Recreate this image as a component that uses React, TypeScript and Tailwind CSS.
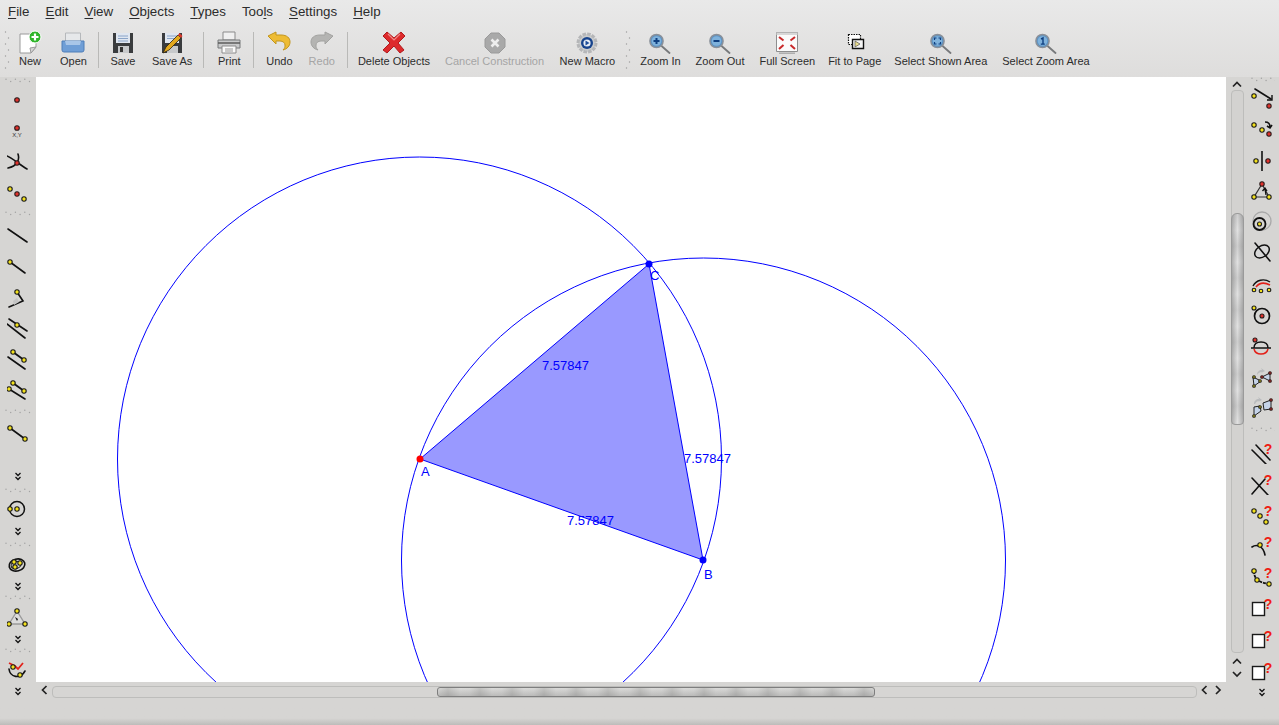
import type { ReactNode } from "react";

const INK = "#111";

function Y({ x, y, r = 2.2 }: { x: number; y: number; r?: number }) {
  return <circle cx={x} cy={y} r={r} fill="#f4e21c" stroke="#1a1a1a" strokeWidth="1.1" />;
}

function Rd({ x, y, r = 2.2 }: { x: number; y: number; r?: number }) {
  return <circle cx={x} cy={y} r={r} fill="#e0322c" stroke="#2a1a1a" strokeWidth="1.1" />;
}

function Ask() {
  return (
    <text x="17" y="12" fontSize="14" fontWeight="700" textAnchor="middle" fill="#ee1c14" fontFamily="'Liberation Sans', sans-serif">
      ?
    </text>
  );
}

function Box() {
  return <rect x="1.5" y="5.5" width="12" height="13" fill="#fff" stroke="#1a1a1a" strokeWidth="1.4" />;
}

function Ic({ children, size = 22 }: { children: ReactNode; size?: number }) {
  return (
    <svg width={size} height={size} viewBox={`0 0 ${size} ${size}`} fill="none" className="block">
      {children}
    </svg>
  );
}

function Lens({ children }: { children?: ReactNode }) {
  return (
    <>
      <path d="M13 15.5l8.5 7.5" stroke="#77797b" strokeWidth="1.8" strokeLinecap="round" />
      <circle cx="8.5" cy="11" r="6.6" fill="#5c93c4" stroke="#8a9099" strokeWidth="1.5" />
      <circle cx="8.5" cy="11" r="4.8" fill="#7fb2dc" />
      <g transform="translate(-2 .5)">{children}</g>
    </>
  );
}

const toolbarIcons: Record<string, ReactNode> = {
  New: (
    <>
      <path d="M2 4h13l3 4v9l-5 6H2z" fill="#fff" stroke="#9a9a9a" />
      <path d="M13 23l-1-5 6-1z" fill="#d5d5d5" stroke="#9a9a9a" />
      <circle cx="17" cy="7" r="6" fill="#2fb52a" stroke="#fff" />
      <path d="M13.5 7h7M17 3.5v7" stroke="#fff" strokeWidth="2.2" />
    </>
  ),
  Open: (
    <>
      <path d="M4.5 3h15v9h-15z" fill="#e6e8ea" stroke="#b5b8bb" />
      <path d="M1 11h22v9a2 2 0 0 1-2 2H3a2 2 0 0 1-2-2z" fill="#6f9ed6" stroke="#4f7eb8" />
      <path d="M4 11h16l-1 4H5z" fill="#a9c6e8" />
    </>
  ),
  Save: (
    <>
      <path d="M2 3h20v20H2z" fill="#3a3c3e" />
      <path d="M5 3h14v10H5z" fill="#dfe6f0" />
      <path d="M7 6h10M7 8.5h10M7 11h10" stroke="#8aa4c8" />
      <path d="M7 16h11v7H7z" fill="#c7c9cb" />
      <path d="M9 17h3v5H9z" fill="#333" />
    </>
  ),
  "Save As": (
    <>
      <path d="M2 3h20v20H2z" fill="#3a3c3e" />
      <path d="M5 3h14v10H5z" fill="#dfe6f0" />
      <path d="M7 6h10M7 8.5h8" stroke="#8aa4c8" />
      <path d="M7 16h11v7H7z" fill="#c7c9cb" />
      <path d="M3 23l3-6L18 5l3 3L9 20z" fill="#e4a91e" stroke="#2c2210" strokeWidth="0.8" />
      <path d="M18 5l3 3 1.5-2-3-3z" fill="#d83a2e" />
    </>
  ),
  Print: (
    <>
      <path d="M6 2h12v8H6z" fill="#f0f0f0" stroke="#8b8b8b" />
      <path d="M1 10h22v8H1z" fill="#c9cacb" stroke="#77797b" />
      <path d="M1 13h22" stroke="#555" strokeWidth="1.4" />
      <path d="M5 16h14v7H5z" fill="#fafafa" stroke="#8b8b8b" />
      <path d="M8 19h8M8 21h8" stroke="#999" />
    </>
  ),
  Undo: (
    <path
      d="M1 6l8-4v3h5c6 0 9 3 9 7 0 4-3 7-7 8 2-2 2-3 2-5 0-2-2-4-5-4H9v3z"
      fill="#eebc34"
      stroke="#c2951c"
      strokeLinejoin="round"
    />
  ),
  Redo: (
    <path
      d="M23 6l-8-4v3h-5C4 5 1 8 1 12c0 4 3 7 7 8-2-2-2-3-2-5 0-2 2-4 5-4h4v3z"
      fill="#b4b4b2"
      stroke="#a2a2a0"
      strokeLinejoin="round"
    />
  ),
  "Delete Objects": (
    <>
      <path d="M5 2l7 6 7-6 4 4-7 7 6 7-4 3-6-7-7 7-4-3 7-7-7-7z" fill="#dd2a2c" stroke="#b01a1c" strokeLinejoin="round" />
      <path d="M6 4l6 6 6-6" stroke="#f28a8a" strokeWidth="1.2" />
    </>
  ),
  "Cancel Construction": (
    <>
      <path d="M8 3h8l6 6v8l-6 6H8l-6-6V9z" fill="#a9a9a9" stroke="#9a9a9a" strokeLinejoin="round" />
      <path d="M8.5 9.5l7 7m0-7l-7 7" stroke="#eee" strokeWidth="2.6" />
    </>
  ),
  "New Macro": (
    <>
      <circle cx="12" cy="13" r="9" fill="#c9cbcc" stroke="#b5b6b8" strokeWidth="3" strokeDasharray="3.5 1.2" />
      <circle cx="12" cy="13" r="6" fill="#17438c" />
      <circle cx="12" cy="13" r="3.6" fill="#e8eef6" />
      <path d="M10.5 10.5l4 2.5-4 2.5z" fill="#1f4f9c" />
    </>
  ),
  "Zoom In": (
    <Lens>
      <path d="M7.5 10.5h6M10.5 7.5v6" stroke="#0e3f80" strokeWidth="2" />
    </Lens>
  ),
  "Zoom Out": (
    <Lens>
      <path d="M7.5 10.5h6" stroke="#0e3f80" strokeWidth="2" />
    </Lens>
  ),
  "Full Screen": (
    <>
      <path d="M1.5 2.5h21v19h-21z" fill="#fbfbfb" stroke="#8e8e8e" />
      <path d="M1.5 2.5h21v2.5h-21z" fill="#d8d8d8" />
      <path d="M4 7l4.5 3.5M4 19l4.5-4M20 7l-4.5 3.5M20 19l-4.5-4" stroke="#c9292a" strokeWidth="2" />
      <path d="M4 23.2h16" stroke="#a9a9a9" strokeWidth="1.4" />
    </>
  ),
  "Fit to Page": (
    <>
      <path d="M5.5 4.5h12v10h-12z" fill="#fff" stroke="#111" strokeWidth="1.2" strokeDasharray="1.5 1" />
      <path d="M9.5 9.5h11v9h-11z" fill="#f5f5f5" stroke="#111" strokeWidth="1.4" />
      <path d="M12 11l5 3-5 3z" fill="#e9dc8d" stroke="#555" strokeWidth="0.7" />
    </>
  ),
  "Select Shown Area": (
    <Lens>
      <path d="M7.5 9.5v-2h2M11.5 7.5h2v2M13.5 11.5v2h-2M9.5 13.5h-2v-2" stroke="#0e3f80" strokeWidth="1.2" />
    </Lens>
  ),
  "Select Zoom Area": (
    <Lens>
      <path d="M9 8.5l2-1v6M8.8 13.6h4" stroke="#0e3f80" strokeWidth="1.4" />
    </Lens>
  ),
};

function ToolButton({ label, disabled, pad = "px-2" }: { label: string; disabled?: boolean; pad?: string }) {
  return (
    <div className={`flex flex-col items-center ${pad}`}>
      <div className="h-[24px] min-w-[26px] flex justify-center">
        <Ic size={24}>{toolbarIcons[label]}</Ic>
      </div>
      <span className={`mt-[1px] text-[11px] leading-[13px] whitespace-nowrap ${disabled ? "text-[#a5a5a5]" : "text-[#2c2c2c]"}`}>
        {label}
      </span>
    </div>
  );
}

function Sep({ l = 3, r = 4 }: { l?: number; r?: number }) {
  return <div className="w-px h-[36px] mt-[2px] bg-[#b9b9b7] shrink-0" style={{ marginLeft: l, marginRight: r }} />;
}

function VGrip({ className }: { className?: string }) {
  return (
    <svg width="6" height="38" className={className}>
      {[0, 1, 2, 3, 4, 5, 6].map((i) => (
        <circle key={i} cx={i % 2 ? 4.5 : 1.5} cy={1 + i * 6} r="0.7" fill="#9c9c9c" />
      ))}
    </svg>
  );
}

function HGrip({ h, width = 30 }: { h: number; width?: number }) {
  return (
    <div className="flex items-center justify-center shrink-0" style={{ height: h }}>
      <svg width={width} height="5">
        {[0, 1, 2, 3, 4, 5].map((i) => (
          <circle key={i} cx={3 + i * 4.7} cy={i % 2 ? 3.5 : 1.2} r="0.7" fill="#a2a2a2" />
        ))}
      </svg>
    </div>
  );
}

function More({ h }: { h: number }) {
  return (
    <div className="flex items-center justify-center shrink-0" style={{ height: h }}>
      <svg width="8" height="9" fill="none">
        <path d="M1.5 1l2.5 2.5L6.5 1M1.5 5l2.5 2.5L6.5 5" stroke="#111" strokeWidth="1.3" />
      </svg>
    </div>
  );
}

function Slot({ children, h = 31 }: { children: ReactNode; h?: number }) {
  return (
    <div className="flex items-center justify-center shrink-0" style={{ height: h }}>
      <Ic>{children}</Ic>
    </div>
  );
}

const ln = { stroke: INK, strokeWidth: 1.6, strokeLinecap: "round" as const };

function LeftToolbar() {
  return (
    <div className="w-[36px] shrink-0 flex flex-col items-center">
      <HGrip h={7} />
      <Slot><Rd x={10} y={11} r={2.3} /></Slot>
      <Slot>
        <Rd x={10} y={8} r={2.3} />
        <text x="10" y="17" fontSize="6" textAnchor="middle" fill="#333" fontFamily="'Liberation Sans', sans-serif">X,Y</text>
      </Slot>
      <Slot>
        <path d="M0 5c4 1 13 9 20 13M11 3c2 6-1 12-10 14" {...ln} />
        <Rd x={10} y={12} />
      </Slot>
      <Slot>
        <Y x={3} y={7} />
        <Rd x={10} y={12} />
        <Y x={17} y={17} />
      </Slot>
      <HGrip h={11} />
      <Slot><path d="M1 5l19 13" {...ln} /></Slot>
      <Slot>
        <path d="M3 7l15 11" {...ln} />
        <Y x={3} y={7} />
      </Slot>
      <Slot>
        <path d="M10 6l6 9L2 21" {...ln} />
        <path d="M6 15l4-3 2 4-5 3z" fill="#c4c4c4" />
        <Y x={10} y={6} />
      </Slot>
      <Slot>
        <path d="M2 2l18 12M0 7l18 14" {...ln} />
        <Y x={10} y={8} />
      </Slot>
      <Slot>
        <path d="M1 9l17 12" {...ln} />
        <path d="M6 4l11 8" stroke={INK} strokeWidth="1.8" />
        <Y x={6} y={4} />
        <Y x={17} y={12} />
      </Slot>
      <Slot>
        <path d="M2 10l16 10" {...ln} />
        <path d="M6 4l11 8" stroke={INK} strokeWidth="1.8" />
        <Y x={6} y={4} />
        <Y x={17} y={12} />
        <Y x={2} y={10} />
      </Slot>
      <HGrip h={12} />
      <Slot>
        <path d="M3 6l15 11" {...ln} />
        <Y x={3} y={6} />
        <Y x={18} y={17} />
      </Slot>
      <div className="h-[17px] shrink-0" />
      <More h={22} />
      <HGrip h={6} />
      <Slot>
        <circle cx="10" cy="11" r="7.5" stroke={INK} strokeWidth="1.5" />
        <Y x={3} y={11} />
        <Y x={10} y={11} />
      </Slot>
      <More h={15} />
      <HGrip h={10} />
      <Slot>
        <ellipse cx="10" cy="11" rx="8" ry="6" transform="rotate(-15 10 11)" stroke={INK} strokeWidth="1.6" />
        <ellipse cx="9" cy="11" rx="5" ry="3.6" transform="rotate(-15 9 11)" stroke={INK} />
        <Y x={7} y={8} />
        <Y x={13} y={9} />
        <Y x={8} y={13} />
      </Slot>
      <More h={12} />
      <HGrip h={10} />
      <Slot>
        <path d="M10 4L2 17h16z" fill="#dcdcdc" stroke="#9a9a9a" strokeWidth="1.4" />
        <path d="M8 10l3 2-1 2z" fill="#111" />
        <Y x={10} y={4} />
        <Y x={2} y={17} />
        <Y x={18} y={17} />
      </Slot>
      <More h={12} />
      <HGrip h={10} />
      <Slot>
        <path d="M2 9c1 8 11 11 16 2" {...ln} />
        <path d="M2 3l6 3 3 3 5-6" stroke="#e32119" strokeWidth="1.8" />
        <Y x={6} y={7} />
        <Y x={13} y={15} />
      </Slot>
      <More h={10} />
    </div>
  );
}

function RightToolbar() {
  return (
    <div className="w-[31px] shrink-0 flex flex-col items-center pr-[3px]">
      <HGrip h={5} width={26} />
      <Slot>
        <path d="M4 2l16 10" {...ln} />
        <path d="M16 13h5V8" stroke={INK} strokeWidth="1.4" />
        <Y x={3} y={9} />
        <Rd x={18} y={19} />
      </Slot>
      <Slot>
        <path d="M14 4c3 0 5 2 5 5m-3-1l3 2 2-3" stroke={INK} strokeWidth="1.6" />
        <Y x={3} y={7} />
        <Y x={11} y={12} />
        <Rd x={18} y={16} />
      </Slot>
      <Slot>
        <path d="M11 2v20" stroke={INK} strokeWidth="1.6" />
        <Y x={5} y={12} />
        <Rd x={17} y={12} />
      </Slot>
      <Slot>
        <path d="M11 4L3 17h15z" stroke="#333" strokeWidth="1.2" />
        <path d="M15 15l-1-6m-2.5 2l2.5-3 2 3" stroke={INK} strokeWidth="1.3" />
        <Rd x={11} y={4} />
        <Y x={3} y={17} />
        <Y x={18} y={17} />
      </Slot>
      <Slot>
        <circle cx="11" cy="10" r="9" stroke="#a9a9a9" strokeWidth="1.3" />
        <circle cx="8.5" cy="13" r="6" stroke={INK} strokeWidth="1.8" />
        <Y x={8.5} y={13} r={2} />
      </Slot>
      <Slot>
        <ellipse cx="11" cy="9.5" rx="8" ry="5.5" transform="rotate(-35 11 9.5)" fill="#d8d8d8" stroke={INK} strokeWidth="1.5" />
        <path d="M4 1l15 18" {...ln} />
      </Slot>
      <Slot>
        <path d="M2 13c3-6 11-8 17-4" stroke={INK} strokeWidth="1.4" />
        <path d="M5 14c3-4 8-5 14-2" stroke="#e32119" strokeWidth="1.5" />
        <Y x={3} y={17} r={1.8} />
        <Y x={10} y={18} r={1.8} />
        <Y x={18} y={17} r={1.8} />
      </Slot>
      <Slot>
        <circle cx="11" cy="12" r="7.5" stroke={INK} strokeWidth="1.7" />
        <Rd x={11} y={12} r={2} />
        <Y x={3} y={4} r={2} />
      </Slot>
      <Slot>
        <path d="M0 13h20" stroke={INK} strokeWidth="1.5" />
        <path d="M3 13c0-4 3-6 7-6s7 2 7 6" stroke={INK} strokeWidth="1.4" />
        <path d="M3 14c1 4 4 5 7 5s6-1 7-5" stroke="#e32119" strokeWidth="1.5" />
        <Rd x={4} y={5} r={2} />
      </Slot>
      <Slot>
        <path d="M6 9c0-3 2-5 5-5l-1-2 4 3-4 2 1-1c-2 0-4 1-5 3z" fill="#b9bbbd" />
        <path d="M11 11l8-4v8z" fill="#c5d3e8" stroke="#222" strokeWidth="1" />
        <path d="M2 11l8 4-7 5z" fill="#c5d3e8" stroke="#222" strokeWidth="1" />
        <Rd x={19} y={7} r={1.3} />
        <Rd x={19} y={15} r={1.3} />
        <Rd x={11} y={11} r={1.3} />
        <Y x={3} y={11} r={1.3} />
        <Y x={9} y={15} r={1.3} />
        <Y x={3} y={20} r={1.3} />
      </Slot>
      <Slot h={29}>
        <path d="M3 8c0-3 2-5 5-5L7 1l4 3-4 2 1-1c-2 0-3 1-4 3z" fill="#b9bbbd" />
        <path d="M12 7l8-3v9l-7 1z" fill="#c5d3e8" stroke="#222" strokeWidth="1" />
        <path d="M3 11l6-1 1 5-7 5z" fill="#c5d3e8" stroke="#222" strokeWidth="1" />
        <Rd x={20} y={4} r={1.3} />
        <Rd x={20} y={13} r={1.3} />
        <Y x={3} y={20} r={1.3} />
        <Y x={9} y={11} r={1.3} />
      </Slot>
      <HGrip h={16} width={26} />
      <Slot>
        <path d="M1 8l14 14M5 3l14 15" {...ln} />
        <Ask />
      </Slot>
      <Slot>
        <path d="M1 5l16 17M1 21L14 6" {...ln} />
        <Ask />
      </Slot>
      <Slot>
        <Y x={3} y={7} />
        <Y x={9} y={12} />
        <Y x={15} y={18} />
        <Ask />
      </Slot>
      <Slot>
        <path d="M1 12c4-3 11-2 13 8" {...ln} />
        <Y x={9} y={10} />
        <Ask />
      </Slot>
      <Slot>
        <path d="M3 5c0 7 3 11 15 13" stroke={INK} strokeWidth="1.8" strokeDasharray="3 1" />
        <Y x={3} y={5} />
        <Y x={6} y={14} />
        <Y x={18} y={18} />
        <Ask />
      </Slot>
      <Slot h={32}><Box /><Ask /></Slot>
      <Slot h={32}><Box /><Ask /></Slot>
      <Slot><Box /><Ask /></Slot>
      <More h={10} />
    </div>
  );
}

function Chev({ d }: { d: string }) {
  return (
    <svg width="10" height="10" fill="none" className="block">
      <path d={d} stroke="#222" strokeWidth="1.7" />
    </svg>
  );
}

function VerticalScroll() {
  return (
    <div className="w-[22px] shrink-0 flex flex-col items-center pt-[3px]">
      <Chev d="M1 6.5l4-4 4 4" />
      <div className="w-[13px] flex-1 flex flex-col rounded-[4px] border border-[#bdbdbb] bg-[#d3d2d0]">
        <div className="h-[122px]" />
        <div className="h-[212px] -mx-px rounded-b-[4px] rounded-t-[6px] border border-[#9a9a9a] bg-[linear-gradient(90deg,#8f8f8f88,#ffffff44_50%,#8f8f8f88),repeating-linear-gradient(180deg,#bcbcbc_0px,#d6d6d6_16px,#bcbcbc_32px)]" />
      </div>
      <div className="flex flex-col mt-[4px] mb-[3px] gap-[2px]">
        <Chev d="M1 6.5l4-4 4 4" />
        <Chev d="M1 3l4 4 4-4" />
      </div>
    </div>
  );
}

function HorizontalScroll() {
  return (
    <div className="h-[16px] flex items-center pr-[22px] bg-[#d6d5d3]">
      <div className="w-[16px] pl-[2px] flex justify-center">
        <Chev d="M6.5 1l-4 4 4 4" />
      </div>
      <div className="flex-1 h-[12px] mt-[4px] rounded-[4px] border border-[#bdbdbb] flex items-stretch">
        <div className="w-[384px]" />
        <div className="w-[438px] rounded-[3px] border border-[#7e7e7e] bg-[linear-gradient(180deg,#ffffff33,#8f8f8f55),repeating-linear-gradient(90deg,#cfcfcd_0px,#b4b4b2_10px,#d2d2d0_22px,#cfcfcd_32px)]" />
      </div>
      <div className="w-[29px] pl-[3px] flex gap-[3px]">
        <Chev d="M6.5 1l-4 4 4 4" />
        <Chev d="M3 1l4 4-4 4" />
      </div>
    </div>
  );
}

function Geometry() {
  const blue = "#0000ff";
  const font = "'Liberation Sans', sans-serif";
  const labels: [string, number, number][] = [
    ["7.57847", 542, 370],
    ["7.57847", 684, 463],
    ["7.57847", 567, 525],
    ["A", 421, 476],
    ["B", 704, 579],
    ["C", 650, 280],
  ];
  return (
    <svg viewBox="36 77 1190 605" className="block w-full h-full" fill="none">
      <circle cx="419.5" cy="459" r="302" stroke={blue} />
      <circle cx="703.5" cy="560" r="302" stroke={blue} />
      <path d="M420 459L703 560L649 264Z" fill="#9999ff" stroke={blue} />
      {labels.map(([t, x, y]) => (
        <text key={t + x} x={x} y={y} fontSize="13" fill={blue} fontFamily={font}>
          {t}
        </text>
      ))}
      <circle cx="420" cy="459" r="3.5" fill="#ff0000" />
      <circle cx="703" cy="560" r="3.5" fill={blue} />
      <circle cx="649" cy="264" r="3.5" fill={blue} />
    </svg>
  );
}

const menus: [string, string, string][] = [
  ["", "F", "ile"],
  ["", "E", "dit"],
  ["", "V", "iew"],
  ["", "O", "bjects"],
  ["", "T", "ypes"],
  ["Too", "l", "s"],
  ["", "S", "ettings"],
  ["", "H", "elp"],
];

export default function App() {
  return (
    <div className="w-[1279px] h-[725px] overflow-hidden flex flex-col bg-[#d6d5d3] font-['Liberation_Sans',Arial,sans-serif]">
      <div className="h-[77px] shrink-0 bg-gradient-to-b from-[#e9e9e9] to-[#dedddc]">
        <div className="h-[24px] flex items-center text-[13.33px] text-[#2c2c2c]">
          {menus.map(([a, u, b]) => (
            <span key={u + b} className="px-2 whitespace-nowrap">
              {a}
              <span className="underline underline-offset-2">{u}</span>
              {b}
            </span>
          ))}
        </div>
        <div className="flex items-start pt-[6px]">
          <VGrip className="ml-[4px] mr-[-1px] mt-[1px] shrink-0" />
          <ToolButton label="New" pad="pl-2 pr-[9px]" />
          <ToolButton label="Open" />
          <Sep l={3} r={3} />
          <ToolButton label="Save" />
          <ToolButton label="Save As" />
          <Sep l={3} r={4} />
          <ToolButton label="Print" />
          <Sep l={3} r={4} />
          <ToolButton label="Undo" />
          <ToolButton label="Redo" disabled />
          <Sep l={4} r={2} />
          <ToolButton label="Delete Objects" pad="pl-2 pr-[7px]" />
          <ToolButton label="Cancel Construction" disabled />
          <ToolButton label="New Macro" pad="px-[7.5px]" />
          <VGrip className="ml-[2px] mr-[2px] mt-[1px] shrink-0" />
          <ToolButton label="Zoom In" pad="px-[7.5px]" />
          <ToolButton label="Zoom Out" pad="px-[7.5px]" />
          <ToolButton label="Full Screen" pad="pl-[7.5px] pr-[6.5px]" />
          <ToolButton label="Fit to Page" pad="px-[6.5px]" />
          <ToolButton label="Select Shown Area" pad="pl-[6.5px] pr-[7.5px]" />
          <ToolButton label="Select Zoom Area" pad="px-[7.5px]" />
        </div>
      </div>

      <div className="flex h-[621px] shrink-0">
        <LeftToolbar />
        <div className="flex-1 flex flex-col min-w-0">
          <div className="h-[605px] flex">
            <div className="w-[1190px] h-[605px] bg-white">
              <Geometry />
            </div>
            <VerticalScroll />
          </div>
          <HorizontalScroll />
        </div>
        <RightToolbar />
      </div>

      <div className="flex-1 bg-gradient-to-b from-[#d6d5d3] from-[75%] to-[#bdbcba]" />
    </div>
  );
}
